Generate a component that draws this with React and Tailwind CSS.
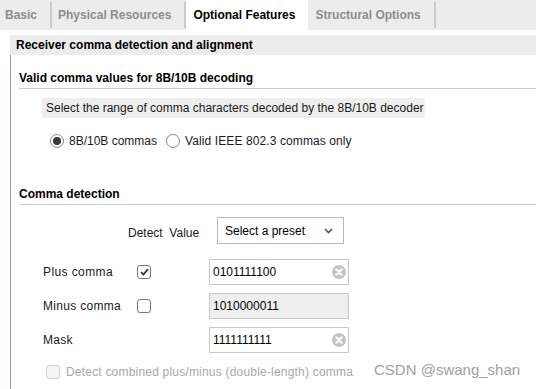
import React from "react";

const font = { fontFamily: '"Liberation Sans", Arial, sans-serif' };

function Clear() {
    return (
        <svg width="14" height="14" viewBox="0 0 14 14">
            <circle cx="7" cy="7" r="7" fill="#c4c4c4" />
            <path d="M4.3 4.3 L9.7 9.7 M9.7 4.3 L4.3 9.7" stroke="#fff" strokeWidth="2" strokeLinecap="round" />
        </svg>
    );
}

function Field({ value, disabled }) {
    return (
        <div className={`w-[140px] h-[26px] border border-[#c8c8c8] flex items-center justify-between pl-[3px] pr-[2px] ${disabled ? "bg-[#eeeeee]" : "bg-white"}`}>
            <span className="text-[12px] text-black">{value}</span>
            {!disabled && <Clear />}
        </div>
    );
}

function Check({ checked, faded }) {
    return (
        <div className={`w-[14px] h-[14px] rounded-[3px] border flex items-center justify-center ${faded ? "border-[#cfcfcf] bg-[#f4f4f4]" : "border-[#777] bg-white"}`}>
            {checked && (
                <svg width="9" height="8" viewBox="0 0 9 8">
                    <path d="M1 4.2 L3.4 6.5 L8 1.2" fill="none" stroke="#333" strokeWidth="1.8" />
                </svg>
            )}
        </div>
    );
}

function Radio({ on }) {
    return (
        <div className="w-[14px] h-[14px] rounded-full border border-[#8a8a8a] bg-white flex items-center justify-center">
            {on && <div className="w-[8px] h-[8px] rounded-full bg-[#3a3a3a]" />}
        </div>
    );
}

export default function App() {
    return (
        <div style={font} className="w-[536px] h-[389px] bg-white overflow-hidden text-[12px] text-[#1a1a1a] relative">
            {/* Tabs */}
            <div className="h-[30px] bg-[#ececec] flex items-stretch">
                <div className="pl-[5px] pr-[13px] flex items-center font-bold text-[#8c8c8c] border-r-[2px] border-[#c9c9c9] my-[2px]">Basic</div>
                <div className="pl-[6px] pr-[13px] flex items-center font-bold text-[#8c8c8c] border-r-[2px] border-[#c9c9c9] my-[2px]">Physical Resources</div>
                <div className="w-[122px] bg-white flex items-center pl-[7px] font-bold text-black">Optional Features</div>
                <div className="pl-[7px] pr-[13px] flex items-center font-bold text-[#8c8c8c] border-r-[2px] border-[#c9c9c9] my-[2px]">Structural Options</div>
            </div>

            {/* Section */}
            <div className="pl-[10px] pt-[5px]">
                <div className="h-[20px] bg-[#ececec] flex items-center pl-[6px] font-bold text-black">
                    Receiver comma detection and alignment
                </div>
                <div className="border-l border-[#8f96b0] pl-[8px] pt-[16px] h-[340px]">
                    <div className="font-bold text-black leading-[14px]">Valid comma values for 8B/10B decoding</div>
                    <div className="h-px bg-[#c8c9d2] mt-[3px]" />
                    <div className="ml-[23px] mt-[9px] w-[383px] h-[20px] bg-[#eeeeee] flex items-center pl-[4px]">
                        Select the range of comma characters decoded by the 8B/10B decoder
                    </div>
                    <div className="flex items-center ml-[31px] mt-[15px] h-[16px]">
                        <Radio on />
                        <span className="ml-[5px]">8B/10B commas</span>
                        <div className="ml-[9px]"><Radio /></div>
                        <span className="ml-[5px] tracking-[0.1px]">Valid IEEE 802.3 commas only</span>
                    </div>

                    <div className="font-bold text-black leading-[14px] mt-[38px]">Comma detection</div>
                    <div className="h-px bg-[#c8c9d2] mt-[3px]" />

                    <div className="flex items-center mt-[12px]">
                        <span className="ml-[109px] w-[89px] mt-[4px]">Detect&nbsp;&nbsp;Value</span>
                        <div className="w-[127px] h-[27px] border border-[#b8b8b8] flex items-center justify-between pl-[7px] pr-[10px] text-black">
                            <span>Select a preset</span>
                            <svg width="9" height="6" viewBox="0 0 9 6">
                                <path d="M1 1 L4.5 4.5 L8 1" fill="none" stroke="#555" strokeWidth="1.6" />
                            </svg>
                        </div>
                    </div>

                    <div className="grid grid-cols-[94px_72px_auto] items-center gap-y-[8px] ml-[24px] mt-[15px]">
                        <span className="tracking-[0.4px]">Plus comma</span>
                        <Check checked />
                        <Field value="0101111100" />
                        <span className="tracking-[0.3px]">Minus comma</span>
                        <Check />
                        <Field value="1010000011" disabled />
                        <span className="tracking-[0.3px]">Mask</span>
                        <div />
                        <Field value="1111111111" />
                    </div>

                    <div className="flex items-center ml-[27px] mt-[10px] text-[#a8a8a8]">
                        <Check faded />
                        <span className="ml-[6px] tracking-[0.2px]">Detect combined plus/minus (double-length) comma</span>
                    </div>
                </div>
            </div>

            <div className="absolute left-[374px] top-[359px] text-[15px] text-[#a0a0a0]">CSDN @swang_shan</div>
        </div>
    );
}
